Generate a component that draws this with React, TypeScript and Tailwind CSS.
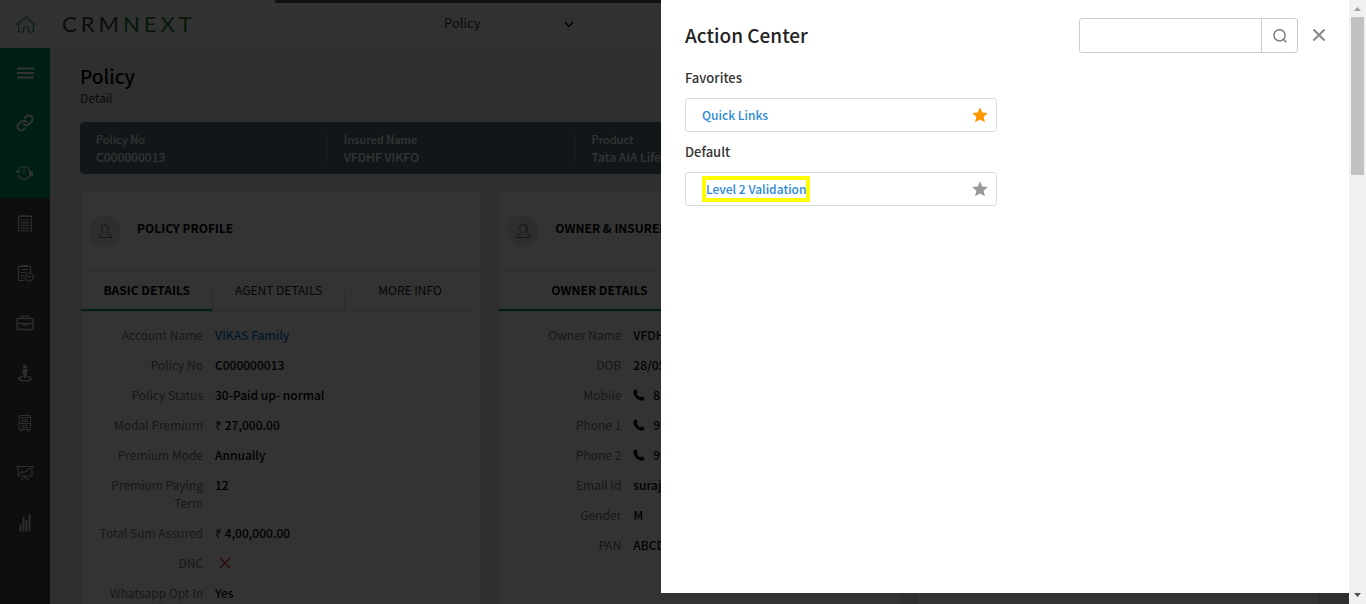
import type { ReactNode } from "react";

type Row = { label: string; value: ReactNode };

const iconProps = {
  fill: "none",
  stroke: "currentColor",
  strokeLinecap: "round" as const,
  strokeLinejoin: "round" as const,
  "aria-hidden": true,
};

function HomeIcon() {
  return (
    <svg {...iconProps} viewBox="0 0 20 18" className="h-[18px] w-5" strokeWidth="1">
      <path d="M.5 9.2 10 .8l9.500 8.400-1.200 1.100L10 3 1.700 10.300z" />
      <path d="M2.700 10v7h5v-5h4.600v5h5v-7" />
    </svg>
  );
}

function MenuIcon() {
  return (
    <svg viewBox="0 0 17 12" className="h-3 w-[17px]" fill="currentColor" aria-hidden>
      <path d="M0 .5h17v2H0zM0 5h17v2H0zM0 9.500h17v2H0z" />
    </svg>
  );
}

function LinkIcon() {
  return (
    <svg {...iconProps} viewBox="0 0 24 24" className="size-[18px]" strokeWidth="2.600">
      <path d="M10 13a5 5 0 0 0 7.540.540l3-3a5 5 0 0 0-7.070-7.070l-1.720 1.710" />
      <path d="M14 11a5 5 0 0 0-7.540-.540l-3 3a5 5 0 0 0 7.070 7.070l1.710-1.710" />
    </svg>
  );
}

function RecentIcon() {
  return (
    <svg {...iconProps} viewBox="0 0 18 16" className="h-4 w-[18px]" strokeWidth="1.100">
      <path d="M2 6.500A6.300 6.300 0 0 1 13.600 5M2.500 10.500A6.300 6.300 0 0 0 13.600 11M8 4v4.500M.6 6 2 8l1.800-1.600" />
      <path d="M13 5.500h2v1h2v4h-2v1h-2z" fill="currentColor" stroke="none" />
    </svg>
  );
}

function NotepadIcon() {
  return (
    <svg {...iconProps} viewBox="0 0 16 18" className="h-[18px] w-4" strokeWidth="1.200">
      <path d="M1.500 2.500h13v14.500h-13zM4 6h8M4 8.700h8M4 11.400h8M4 14.100h8" />
      <path d="M3 1.500h1.500M6 1.500h1.500M9 1.500h1.500M12 1.500h1" />
    </svg>
  );
}

function TaskIcon() {
  return (
    <svg {...iconProps} viewBox="0 0 17 18" className="h-[18px] w-[17px]" strokeWidth="1.200">
      <path d="M7 16.500H1.500v-14h12v6M4.500 1.500h6M4.500 5.500h6M4.500 8.500h4M4 11.500h2.500M4 14h2" />
      <circle cx="12" cy="13" r="4" />
      <path d="m10.300 12 1.700 1.500L13.500 12" />
    </svg>
  );
}

function BriefcaseIcon() {
  return (
    <svg {...iconProps} viewBox="0 0 18 16" className="h-4 w-[18px]" strokeWidth="1.300">
      <path d="M1 3.500h16v11H1zM5.500 3.300V1.200h7v2.100M1 8.500h5.500M11.500 8.500H17" />
      <path d="M6.500 8h5v2.500h-5z" fill="currentColor" stroke="none" />
    </svg>
  );
}

function PersonIcon() {
  return (
    <svg viewBox="0 0 16 18" className="h-[18px] w-4" fill="currentColor" aria-hidden>
      <circle cx="8" cy="2.500" r="2" />
      <path d="M5.500 5h5v4.500L9.500 10v4h-3v-4l-1-.5z" />
      <path d="M5.500 12C2.500 12.300 1 13.400 1 14.500 1 16.300 4 17.500 8 17.500s7-1.200 7-3c0-1.100-1.500-2.200-4.500-2.500v1.200c1.500.2 2.500.7 2.500 1.300 0 .8-2 1.500-5 1.500s-5-.7-5-1.500c0-.6 1-1.100 2.500-1.300z" />
    </svg>
  );
}

function CabinetIcon() {
  return (
    <svg {...iconProps} viewBox="0 0 14 18" className="h-[18px] w-3.5" strokeWidth="1">
      <path d="M1.500 1.500h11v14h-11zM1.500 3.500h11M1.500 9.500h11M4.500 5.500h5v2h-5zM4.500 11.500h5v2h-5z" />
      <path d="M2.500 16h2v1.500h-2zM9.500 16h2v1.500h-2z" fill="currentColor" stroke="none" />
    </svg>
  );
}

function BoardIcon() {
  return (
    <svg {...iconProps} viewBox="0 0 18 16" className="h-4 w-[18px]" strokeWidth="1.200">
      <path d="M.8 1.500h16.400M2 1.500v9.500h14V1.500M4 8.500l2-2 1.500 1 3-1 1.500-2.500 2-.5M9 11v2M5.500 14.500l3.500-2 3.500 2" />
    </svg>
  );
}

function BarsIcon() {
  return (
    <svg viewBox="0 0 12 18" className="h-[18px] w-3" fill="currentColor" aria-hidden>
      <path d="M.5 10.500h2v7h-2zM3.500 3h2v14.500h-2zM6.500 6.500h2v11h-2zM9.500.5h2v17h-2z" />
    </svg>
  );
}

function UserIcon({ pair = false }: { pair?: boolean }) {
  return (
    <svg {...iconProps} viewBox="0 0 16 16" className="size-4" strokeWidth="1">
      <path d="M8 1.500C5.800 1.500 4.700 3.100 4.700 5.200c0 1.700.7 3.200 1.800 4.300C6.200 11 1.300 11.300 1.300 14.500h13.400c0-3.200-4.900-3.500-5.200-5 1.100-1.100 1.800-2.600 1.800-4.300 0-2.100-1.100-3.700-3.300-3.700z" />
      {pair && <path d="M8.500.8c3.300-.3 4.700 1.800 4.400 4.100-.2 1.500-.7 2.600-1.400 3.400.6 1.200 3.600 1.500 4 4.200" />}
    </svg>
  );
}

function PhoneIcon() {
  return (
    <svg viewBox="0 0 12 12" className="size-3 shrink-0" fill="currentColor" aria-hidden>
      <path d="M2.700.6 1 1.500C-.2 3 .5 5.800 3 8.500c2.700 2.900 5.800 3.800 7.300 2.700l1.200-1.500c.2-.3.1-.6-.2-.8L9 7.500c-.3-.2-.7-.1-.9.2l-.8.8C6.500 8.300 3.800 5.700 3.500 4.500l.8-.8c.3-.2.3-.5.200-.8L3.500.8C3.300.5 3 .4 2.700.6z" />
    </svg>
  );
}

function StarIcon() {
  return (
    <svg viewBox="0 0 16 16" className="size-4" fill="currentColor" aria-hidden>
      <path d="M8 .3 10.300 5.400l5.500.6-4.100 3.700 1.200 5.500L8 12.400l-4.900 2.800 1.200-5.500L.2 6l5.500-.6z" />
    </svg>
  );
}

const navItems: { name: string; icon: ReactNode; green?: boolean }[] = [
  { name: "Menu", icon: <MenuIcon />, green: true },
  { name: "Links", icon: <LinkIcon />, green: true },
  { name: "Recent", icon: <RecentIcon />, green: true },
  { name: "Notes", icon: <NotepadIcon /> },
  { name: "Tasks", icon: <TaskIcon /> },
  { name: "Business", icon: <BriefcaseIcon /> },
  { name: "Customers", icon: <PersonIcon /> },
  { name: "Records", icon: <CabinetIcon /> },
  { name: "Presentations", icon: <BoardIcon /> },
  { name: "Reports", icon: <BarsIcon /> },
];

const summary = [
  { label: "Policy No", value: "C000000013" },
  { label: "Insured Name", value: "VFDHF VIKFO" },
  { label: "Product", value: "Tata AIA Life" },
];

const phone = (text: string) => (
  <span className="flex items-center gap-2">
    <PhoneIcon />
    {text}
  </span>
);

const policyRows: Row[] = [
  {
    label: "Account Name",
    value: (
      <a href="#account" className="text-[#0a78d1]">
        VIKAS Family
      </a>
    ),
  },
  { label: "Policy No", value: "C000000013" },
  { label: "Policy Status", value: "30-Paid up- normal" },
  { label: "Modal Premium", value: "₹ 27,000.00" },
  { label: "Premium Mode", value: "Annually" },
  { label: "Premium Paying Term", value: "12" },
  { label: "Total Sum Assured", value: "₹ 4,00,000.00" },
  {
    label: "DNC",
    value: (
      <svg viewBox="0 0 12 12" className="ml-1 h-[18px] w-3" role="img" aria-label="No">
        <path d="m1 1 10 10M11 1 1 11" stroke="#e02020" strokeWidth="1.400" />
      </svg>
    ),
  },
  { label: "Whatsapp Opt In", value: "Yes" },
];

const ownerRows: Row[] = [
  { label: "Owner Name", value: "VFDHF" },
  { label: "DOB", value: "28/05" },
  { label: "Mobile", value: phone("8") },
  { label: "Phone 1", value: phone("99") },
  { label: "Phone 2", value: phone("99") },
  { label: "Email Id", value: "suraj" },
  { label: "Gender", value: "M" },
  { label: "PAN", value: "ABCD" },
];

function Card({
  title,
  icon,
  tabs,
  rows,
  wideTabs,
}: {
  title?: string;
  icon?: ReactNode;
  tabs: string[];
  rows: Row[];
  wideTabs?: boolean;
}) {
  return (
    <section className="min-w-0 rounded border border-[#dcdcdc] bg-white">
      <div className="flex h-20 items-center gap-4 border-b border-[#e2e2e2] pl-2">
        {icon && (
          <span className="flex size-8 items-center justify-center rounded-full bg-[#e6e6e6] text-[#777]">
            {icon}
          </span>
        )}
        <h2 className="pb-1.5 text-[12px] leading-[18px] font-bold whitespace-nowrap text-black">{title}</h2>
      </div>
      <div
        className={
          wideTabs
            ? "grid h-[41px] grid-cols-2 border-b border-[#e2e2e2]"
            : "mr-1.5 grid h-[41px] grid-cols-3 border-b border-[#e2e2e2]"
        }
        role="tablist"
      >
        {tabs.map((tab, i) => (
          <button
            key={tab}
            type="button"
            role="tab"
            aria-selected={i === 0}
            className={
              i === 0
                ? "border-b-2 border-[#009b64] text-[12px] leading-[18px] font-bold whitespace-nowrap text-black"
                : "flex items-stretch text-[12px] leading-[18px] whitespace-nowrap text-[#222]"
            }
          >
            {i === 0 ? (
              tab
            ) : (
              <>
                <span className="mt-5 w-px bg-[#dcdcdc]" />
                <span className="flex-1 self-center pb-0.5">{tab}</span>
              </>
            )}
          </button>
        ))}
      </div>
      <dl className="pt-2">
        {rows.map((row) => (
          <div key={row.label} className="flex gap-3 py-1.5 text-[12px] leading-[18px]">
            <dt className="w-[122px] shrink-0 pl-3.5 text-right text-[#777]">{row.label}</dt>
            <dd className="font-medium whitespace-nowrap text-black">{row.value}</dd>
          </div>
        ))}
      </dl>
    </section>
  );
}

function ActionItem({
  name,
  starred,
  highlighted,
}: {
  name: string;
  starred?: boolean;
  highlighted?: boolean;
}) {
  return (
    <div className="flex h-[34px] w-[312px] items-center justify-between rounded-[3px] border border-[#dcdcdc] pr-2 pl-4">
      <a
        href="#action"
        className={
          highlighted
            ? "border-4 border-[#ffff00] text-[12px] leading-[18px] font-medium text-[#2b8ad8]"
            : "text-[12px] leading-[18px] font-medium text-[#2b8ad8]"
        }
      >
        {name}
      </a>
      <button
        type="button"
        aria-label={`Favorite ${name}`}
        aria-pressed={!!starred}
        className={starred ? "text-[#ff9800]" : "text-[#999]"}
      >
        <StarIcon />
      </button>
    </div>
  );
}

function ActionCenter() {
  return (
    <aside
      role="dialog"
      aria-label="Action Center"
      className="absolute top-0 right-0 bottom-[11px] w-[51%] bg-white pt-[18px] pr-[22px] pl-6"
    >
      <div className="flex items-center">
        <h2 className="flex-1 pb-0.5 text-[19px] leading-[30px] font-medium text-[#222]">Action Center</h2>
        <div className="flex h-[35px] w-[219px] rounded-[3px] border border-[#ccc]">
          <input type="text" aria-label="Search actions" className="min-w-0 flex-1 px-2 text-[12px] outline-none" />
          <button
            type="button"
            aria-label="Search"
            className="flex w-9 items-center justify-center border-l border-[#ccc] text-[#777]"
          >
            <svg viewBox="0 0 14 14" className="size-3.5" fill="none" stroke="currentColor" strokeWidth="1.400">
              <circle cx="6.500" cy="6.300" r="5.600" />
              <path d="m10.300 10.300 3 3" />
            </svg>
          </button>
        </div>
        <button type="button" aria-label="Close" className="ml-[13px] px-px pb-0.5 text-[#888]">
          <svg viewBox="0 0 14 14" className="size-3.5" fill="none" stroke="currentColor" strokeWidth="2">
            <path d="m1.500 1.500 11 11M12.500 1.500l-11 11" />
          </svg>
        </button>
      </div>
      <h3 className="mt-4 mb-[11px] text-[13px] leading-[18px] font-medium text-[#333]">Favorites</h3>
      <ActionItem name="Quick Links" starred />
      <h3 className="mt-[11px] mb-[11px] text-[13px] leading-[18px] font-medium text-[#333]">Default</h3>
      <ActionItem name="Level 2 Validation" highlighted />
    </aside>
  );
}

export default function App() {
  return (
    <div className="flex h-screen overflow-hidden font-['Noto_Sans_CJK_SC',sans-serif]">
      <div className="relative flex min-w-0 flex-1 flex-col overflow-hidden bg-[#ececec]">
        <header className="flex h-12 shrink-0 items-center bg-[#fbfbfb]">
          <a href="#home" aria-label="Home" className="flex w-[52px] justify-center text-[#2a8a5e]">
            <HomeIcon />
          </a>
          <div className="w-[382px] pl-2.5 font-['Lato'] text-[22px] leading-6 tracking-[4px] text-[#444]">
            CRM<span className="text-[#1f7a2a]">NEXT</span>
          </div>
          <div className="flex h-9 flex-1 rounded bg-[#f3f3f3]">
            <div className="relative w-[148px] rounded bg-[#f3f3f3]">
              <select
                aria-label="Search in"
                className="h-full w-full appearance-none pb-0.5 pl-2.5 text-[13px] text-[#333]"
              >
                <option>Policy</option>
              </select>
              <svg
                viewBox="0 0 10 7"
                className="pointer-events-none absolute top-[15px] right-2 h-[7px] w-2.5"
                fill="none"
                stroke="#000"
                strokeWidth="1.600"
              >
                <path d="m.8 1 4.200 4.200L9.200 1" />
              </svg>
            </div>
          </div>
        </header>
        <div className="flex min-h-0 flex-1">
          <nav className="flex w-[50px] shrink-0 flex-col bg-[#464646]" aria-label="Main">
            {navItems.map((item) => (
              <a
                key={item.name}
                href="#nav"
                aria-label={item.name}
                className={
                  item.green
                    ? "flex h-[50px] shrink-0 items-center justify-center bg-[#009b64] text-white"
                    : "flex h-[50px] shrink-0 items-center justify-center text-[#dedede]"
                }
              >
                {item.icon}
              </a>
            ))}
          </nav>
          <main className="min-w-0 flex-1 px-[30px] pt-4">
            <h1 className="text-[19px] leading-6 font-medium text-black">Policy</h1>
            <p className="text-[12px] leading-5 text-[#333]">Detail</p>
            <div className="mt-3.5 mb-4 grid h-[52px] grid-cols-5 rounded bg-[#55737d] py-2">
              {summary.map((item) => (
                <div
                  key={item.label}
                  className="border-r border-[#70868f] pl-4 leading-[18px] font-medium whitespace-nowrap text-white"
                >
                  <div className="text-[11px]">{item.label}</div>
                  <div className="text-[12px]">{item.value}</div>
                </div>
              ))}
            </div>
            <div className="grid grid-cols-3 gap-4">
              <Card
                title="POLICY PROFILE"
                icon={<UserIcon />}
                tabs={["BASIC DETAILS", "AGENT DETAILS", "MORE INFO"]}
                rows={policyRows}
              />
              <Card
                title="OWNER & INSURED"
                icon={<UserIcon pair />}
                tabs={["OWNER DETAILS"]}
                rows={ownerRows}
                wideTabs
              />
              <Card tabs={[]} rows={[]} />
            </div>
          </main>
        </div>
        <div className="absolute inset-x-[275px] top-0 h-[3px] bg-[#555]" />
        <div className="absolute inset-0 bg-black/80" />
        <ActionCenter />
      </div>
      <div className="flex w-[17px] shrink-0 flex-col items-center bg-[#f1f1f1]" aria-hidden>
        <svg viewBox="0 0 17 17" className="size-[17px] shrink-0" fill="#a3a3a3">
          <path d="M5 11h7L8.500 7z" />
        </svg>
        <div className="h-[158px] w-[13px] bg-[#c1c1c1]" />
        <div className="flex-1" />
        <svg viewBox="0 0 17 17" className="size-[17px] shrink-0" fill="#505050">
          <path d="M5 6h7l-3.500 4z" />
        </svg>
      </div>
    </div>
  );
}
